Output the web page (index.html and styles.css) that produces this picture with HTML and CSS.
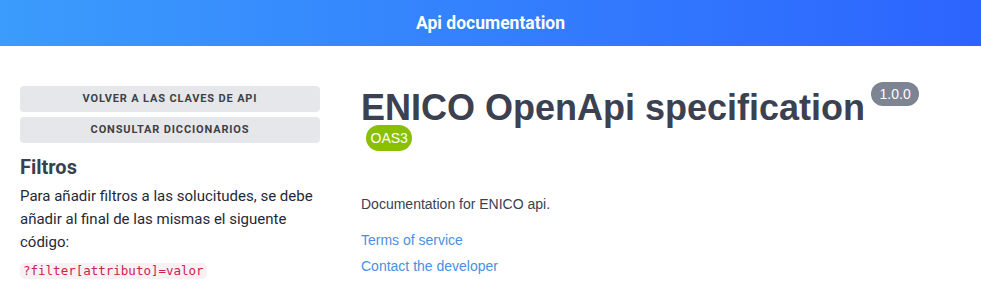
FILE: index.html
```html
<!DOCTYPE html>
<html lang="es">
<head>
    <meta charset="UTF-8">
    <meta name="viewport" content="width=device-width, initial-scale=1.0">
    <link rel="stylesheet" href="styles.css">
    <title>Api documentation</title>
</head>
<body>

<header class="topbar">
    <h1>Api documentation</h1>
</header>

<main class="layout">
    <aside class="sidebar">
        <a class="side-btn" href="#">Volver a las claves de API</a>
        <a class="side-btn" href="#">Consultar diccionarios</a>
        <h3>Filtros</h3>
        <p>Para añadir filtros a las solucitudes, se debe añadir al final de las mismas el siguente código:</p>
        <code>?filter[attributo]=valor</code>
    </aside>

    <section class="info">
        <div class="title">
            <span class="title-text">ENICO OpenApi specification</span>
            <span class="badge version">1.0.0</span>
            <span class="badge oas">OAS3</span>
        </div>
        <p class="description">Documentation for ENICO api.</p>
        <a class="info-link tos" href="#">Terms of service</a>
        <a class="info-link" href="#">Contact the developer</a>
    </section>
</main>

</body>
</html>
```

FILE: styles.css
```css
body {
    margin: 0;
    font-family: 'Roboto', sans-serif;
    background: #fff;
}

.topbar {
    height: 46px;
    background: linear-gradient(to right, #3b9cfc, #2c64fe);
    display: flex;
    justify-content: center;
    align-items: center;
}

.topbar h1 {
    margin: 0;
    font-family: 'Roboto', sans-serif;
    font-size: 17.5px;
    font-weight: 700;
    color: #fff;
}

.layout {
    display: flex;
    padding: 40px 20px 0 20px;
    gap: 41px;
}

.sidebar {
    width: 300px;
    flex-shrink: 0;
    display: flex;
    flex-direction: column;
    align-items: flex-start;
}

.side-btn {
    align-self: stretch;
    display: block;
    height: 26px;
    line-height: 26px;
    margin-bottom: 5px;
    background: #e5e7eb;
    border-radius: 4px;
    text-align: center;
    text-decoration: none;
    text-transform: uppercase;
    font-family: 'Roboto', sans-serif;
    font-size: 11px;
    font-weight: 700;
    letter-spacing: 0.85px;
    color: #3f3f46;
}

.sidebar h3 {
    margin: 5px 0 4px 0;
    font-family: 'Roboto', sans-serif;
    font-size: 20px;
    line-height: 28px;
    font-weight: 700;
    color: #374151;
}

.sidebar p {
    margin: 0 0 9px 0;
    font-size: 15px;
    line-height: 23px;
    color: #1f2937;
}

.sidebar code {
    font-family: 'DejaVu Sans Mono', monospace;
    font-size: 12.5px;
    line-height: 16px;
    padding: 0 3px;
    background: #f8f1f4;
    border-radius: 5px;
    color: #c7254e;
}

.info {
    flex: 1;
    font-family: 'Liberation Sans', Arial, sans-serif;
    color: #3b4151;
}

.title {
    display: flex;
    flex-wrap: wrap;
    align-items: flex-start;
    margin-top: -4px;
}

.title-text {
    margin-top: 8px;
    font-size: 36px;
    line-height: 35px;
    font-weight: 700;
    color: #3b4151;
}

.badge {
    display: inline-block;
    font-size: 14px;
    color: #fff;
    border-radius: 57px;
}

.version {
    margin-left: 6px;
    padding: 0 8.5px;
    line-height: 24px;
    background: #7d8492;
}

.oas {
    margin-left: 5px;
    padding: 0 4.5px;
    line-height: 26px;
    background: #89bf04;
}

.description {
    margin: 43px 0 15px 0;
    font-size: 14px;
    line-height: 21px;
}

.info-link {
    display: block;
    margin-bottom: 5px;
    font-size: 14px;
    line-height: 21px;
    color: #4990e2;
    text-decoration: none;
}
```
